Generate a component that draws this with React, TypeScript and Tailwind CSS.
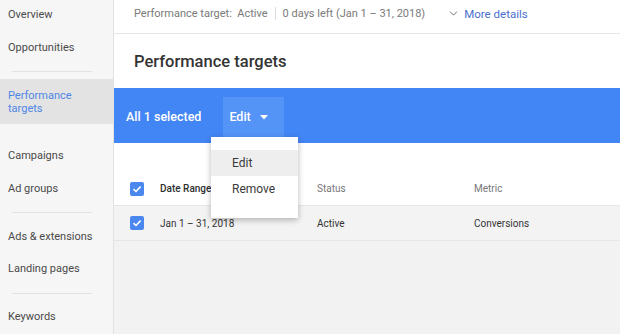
import { ChevronDown } from "lucide-react";

const font = { fontFamily: "Roboto, 'Liberation Sans', sans-serif" };

function NavItem({ label }: { label: string }) {
  return <div className="h-[30px] flex items-center px-[8px] text-[11px] text-[#4a4a4a]">{label}</div>;
}

function Divider({ h }: { h: string }) {
  return (
    <div className={`${h} flex items-center`}>
      <div className="ml-[12px] w-[80px] h-px bg-[#e2e2e2]" />
    </div>
  );
}

function Check() {
  return (
    <div className="w-[14px] h-[14px] rounded-[2px] bg-[#4a87ee] flex items-center justify-center">
      <svg width="10" height="10" viewBox="0 0 10 10">
        <path d="M1.5 5.2 L4 7.5 L8.6 2.6" stroke="white" strokeWidth="1.6" fill="none" />
      </svg>
    </div>
  );
}

export default function App() {
  return (
    <div className="w-[620px] h-[334px] flex overflow-hidden bg-[#f2f2f2]" style={font}>
      <div className="w-[114px] shrink-0 bg-[#f6f6f6] border-r border-[#e2e2e2] flex flex-col">
        <NavItem label="Overview" />
        <div className="h-[3px]" />
        <NavItem label="Opportunities" />
        <Divider h="h-[16px]" />
        <div className="h-[45px] bg-[#e3e3e3] text-[#4f86e6] px-[8px] flex items-center text-[11px] leading-[13px]">
          <span>
            Performance
            <br />
            targets
          </span>
        </div>
        <div className="h-[17px]" />
        <NavItem label="Campaigns" />
        <div className="h-[3px]" />
        <NavItem label="Ad groups" />
        <Divider h="h-[16px]" />
        <div className="h-[2px]" />
        <NavItem label="Ads & extensions" />
        <div className="h-[2px]" />
        <NavItem label="Landing pages" />
        <Divider h="h-[18px]" />
        <NavItem label="Keywords" />
      </div>

      <div className="flex-1 flex flex-col relative">
        <div className="h-[34px] bg-white border-b border-[#e6e6e6] pl-[20px] pt-[6px] flex items-start text-[11px] text-[#7a7a7a]">
          <span>Performance target:&nbsp; Active</span>
          <span className="mx-[7px] mt-[1px] w-px h-[13px] bg-[#dddddd]" />
          <span>0 days left (Jan 1 – 31, 2018)</span>
          <ChevronDown size={13} className="ml-[22px] mt-[1px] text-[#5a5a5a]" strokeWidth={1.6} />
          <span className="ml-[4px] text-[#4b6fd0] text-[11.5px]">More details</span>
        </div>
        <div className="h-[54px] bg-white pl-[20px] flex items-center pt-[3px]">
          <span className="text-[16.5px] text-[#333333] font-medium">Performance targets</span>
        </div>
        <div className="h-[55px] bg-[#4285f4] flex items-center pl-[12px] text-white text-[12.5px] font-medium">
          <span className="mt-[3px]">All 1 selected</span>
          <div className="ml-[22px] mt-[3px] h-[40px] w-[61px] bg-[#5494f6] flex items-center pl-[6px]">
            <span>Edit</span>
            <svg width="8" height="5" viewBox="0 0 8 5" className="ml-[9px]">
              <path d="M0 0 L8 0 L4 4.5 Z" fill="white" />
            </svg>
          </div>
        </div>
        <div className="h-[62px] bg-white flex items-end pb-[9px] text-[10px]">
          <div className="pl-[16px] w-[46px]">
            <Check />
          </div>
          <span className="w-[157px] font-medium text-[#2e2e2e]">Date Range</span>
          <span className="w-[157px] text-[#777777]">Status</span>
          <span className="text-[#777777]">Metric</span>
        </div>
        <div className="h-[36px] bg-[#f3f3f3] border-t border-b border-[#e6e6e6] flex items-center text-[10px] text-[#333333]">
          <div className="pl-[16px] w-[46px]">
            <Check />
          </div>
          <span className="w-[157px]">Jan 1 – 31, 2018</span>
          <span className="w-[157px]">Active</span>
          <span>Conversions</span>
        </div>

        <div className="absolute left-[97px] top-[137px] w-[87px] h-[81px] bg-white shadow-[0_2px_6px_rgba(0,0,0,0.28)] py-[13px] text-[12px] text-[#3a3a3a]">
          <div className="h-[26px] bg-[#eeeeee] flex items-center pl-[21px]">Edit</div>
          <div className="h-[26px] flex items-center pl-[21px]">Remove</div>
        </div>
      </div>
    </div>
  );
}
